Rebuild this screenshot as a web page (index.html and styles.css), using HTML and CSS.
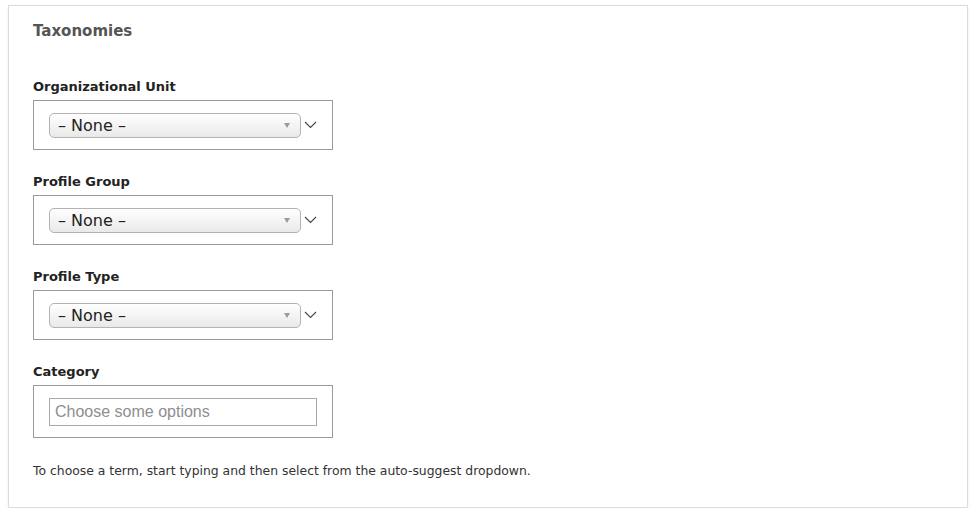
FILE: index.html
```html
<!DOCTYPE html>
<html>
<head>
<meta charset="utf-8">
<link rel="stylesheet" href="styles.css">
</head>
<body>
<div class="card">
  <h2 class="card-title">Taxonomies</h2>
  <div class="field">
    <div class="label">Organizational Unit</div>
    <div class="box">
      <div class="select-row">
        <div class="select"><span class="select-text">– None –</span><span class="tri"></span></div>
        <svg class="chev" width="13" height="8" viewBox="0 0 13 8"><path d="M1 1 L6.5 6.5 L12 1" fill="none" stroke="#444" stroke-width="1.1"/></svg>
      </div>
    </div>
  </div>
  <div class="field">
    <div class="label">Profile Group</div>
    <div class="box">
      <div class="select-row">
        <div class="select"><span class="select-text">– None –</span><span class="tri"></span></div>
        <svg class="chev" width="13" height="8" viewBox="0 0 13 8"><path d="M1 1 L6.5 6.5 L12 1" fill="none" stroke="#444" stroke-width="1.1"/></svg>
      </div>
    </div>
  </div>
  <div class="field">
    <div class="label">Profile Type</div>
    <div class="box">
      <div class="select-row">
        <div class="select"><span class="select-text">– None –</span><span class="tri"></span></div>
        <svg class="chev" width="13" height="8" viewBox="0 0 13 8"><path d="M1 1 L6.5 6.5 L12 1" fill="none" stroke="#444" stroke-width="1.1"/></svg>
      </div>
    </div>
  </div>
  <div class="field">
    <div class="label">Category</div>
    <div class="box box-input">
      <div class="input"><span class="placeholder">Choose some options</span></div>
    </div>
  </div>
  <p class="help">To choose a term, start typing and then select from the auto-suggest dropdown.</p>
</div>
</body>
</html>
```
FILE: styles.css
```css
html, body {
  margin: 0;
  padding: 0;
  background: #fff;
}
body {
  padding: 5px 8px 0 8px;
  font-family: "DejaVu Sans", sans-serif;
  color: #222;
}
.card {
  width: 934px;
  height: 486px;
  border: 1px solid #dcdcdc;
  box-shadow: 0 1px 2px rgba(0,0,0,0.08);
  padding: 15px 0 0 24px;
}
.card-title {
  margin: 0;
  font-size: 15px;
  line-height: 20px;
  font-weight: bold;
  color: #555;
}
.field {
  margin-top: 36px;
}
.field + .field {
  margin-top: 22px;
}
.label {
  font-size: 13px;
  line-height: 18px;
  font-weight: bold;
  color: #222;
  padding-top: 1px;
  margin-bottom: 4px;
}
.box {
  width: 283px;
  height: 48px;
  border: 1px solid #9a9a9a;
  padding: 0 0 0 15px;
  display: flex;
  align-items: center;
}
.box-input {
  height: 51px;
}
.select-row {
  display: flex;
  align-items: center;
  gap: 3px;
}
.select {
  width: 232px;
  height: 23px;
  border: 1px solid #b3b3b3;
  border-radius: 5px;
  background: linear-gradient(#ffffff, #f4f4f4 50%, #e9e9e9);
  display: flex;
  align-items: center;
  justify-content: space-between;
  padding: 0 10px 0 8px;
}
.select-text {
  font-size: 16px;
  color: #222;
}
.tri {
  width: 0;
  height: 0;
  border-left: 3.5px solid transparent;
  border-right: 3.5px solid transparent;
  border-top: 5px solid #9a9a9a;
}
.chev {
  display: block;
}
.input {
  width: 261px;
  height: 26px;
  border: 1px solid #a9a9a9;
  padding: 0 0 0 5px;
  display: flex;
  align-items: center;
}
.placeholder {
  font-family: "Liberation Sans", Arial, sans-serif;
  font-size: 16px;
  color: #8e8e8e;
}
.help {
  margin: 25px 0 0 0;
  font-size: 12.4px;
  line-height: 16px;
  color: #333;
}
```
